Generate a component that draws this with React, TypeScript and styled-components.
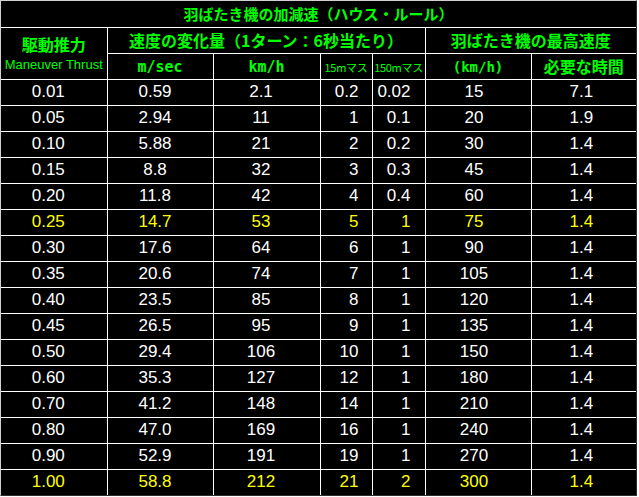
import styled, { createGlobalStyle } from "styled-components";

const GREEN = "#00ff00";
const YELLOW = "#ffff00";

const GlobalStyle = createGlobalStyle`
  html, body {
    margin: 0;
    padding: 0;
    background: #ffffff;
  }
`;

const Frame = styled.div`
  display: inline-block;
  background: #000000;
  border-top: 1px solid #d0d0d0;
  border-left: 1px solid #d0d0d0;
  border-right: 1px solid #303030;
  border-bottom: 1px solid #303030;
`;

const Sheet = styled.table`
  width: 635px;
  table-layout: fixed;
  border-collapse: collapse;
  border-style: hidden;
  background: #000000;

  tr {
    height: 26px;
  }
`;

const HeadCell = styled.th<{ $size?: number }>`
  border: 1px solid #ffffff;
  padding: 0;
  color: ${GREEN};
  font-family: "Noto Sans CJK JP", "DejaVu Sans", sans-serif;
  font-weight: 700;
  font-size: ${({ $size }) => $size ?? 16}px;
  line-height: 18px;
  text-align: center;
  vertical-align: middle;
  white-space: nowrap;
`;

const MainLabel = styled.div`
  line-height: 20px;
`;

const SubLabel = styled.div`
  margin-top: 3px;
  font-family: "Liberation Sans", Arial, sans-serif;
  font-weight: 400;
  font-size: 13px;
  line-height: 15px;
`;

const Small = styled.span`
  font-family: "Noto Sans CJK JP", sans-serif;
  font-weight: 400;
  font-size: 11px;
  letter-spacing: -0.3px;
`;

const Unit = styled.span<{ $size?: number }>`
  font-family: "DejaVu Sans Mono", "Liberation Mono", monospace;
  font-weight: 700;
  font-size: ${({ $size }) => $size ?? 15}px;
`;

const Cell = styled.td<{ $tone: "white" | "yellow"; $align?: "center" | "right"; $pad: number }>`
  border: 1px solid #ffffff;
  padding: 0 ${({ $pad }) => $pad}px 0 0;
  color: ${({ $tone }) => ($tone === "yellow" ? YELLOW : "#ffffff")};
  font-family: "Liberation Sans", Arial, sans-serif;
  font-size: 17px;
  line-height: 20px;
  text-align: ${({ $align }) => $align ?? "center"};
  vertical-align: middle;
  white-space: nowrap;
  overflow: visible;
`;

const rows: string[][] = [
  ["0.01", "0.59", "2.1", "0.2", "0.02", "15", "7.1"],
  ["0.05", "2.94", "11", "1", "0.1", "20", "1.9"],
  ["0.10", "5.88", "21", "2", "0.2", "30", "1.4"],
  ["0.15", "8.8", "32", "3", "0.3", "45", "1.4"],
  ["0.20", "11.8", "42", "4", "0.4", "60", "1.4"],
  ["0.25", "14.7", "53", "5", "1", "75", "1.4"],
  ["0.30", "17.6", "64", "6", "1", "90", "1.4"],
  ["0.35", "20.6", "74", "7", "1", "105", "1.4"],
  ["0.40", "23.5", "85", "8", "1", "120", "1.4"],
  ["0.45", "26.5", "95", "9", "1", "135", "1.4"],
  ["0.50", "29.4", "106", "10", "1", "150", "1.4"],
  ["0.60", "35.3", "127", "12", "1", "180", "1.4"],
  ["0.70", "41.2", "148", "14", "1", "210", "1.4"],
  ["0.80", "47.0", "169", "16", "1", "240", "1.4"],
  ["0.90", "52.9", "191", "19", "1", "270", "1.4"],
  ["1.00", "58.8", "212", "21", "2", "300", "1.4"],
];

const highlighted = ["0.25", "1.00"];

// per column: alignment and right padding
const columns: { align: "center" | "right"; pad: number }[] = [
  { align: "center", pad: 11 },
  { align: "center", pad: 10 },
  { align: "center", pad: 11 },
  { align: "right", pad: 13 },
  { align: "right", pad: 14 },
  { align: "center", pad: 8 },
  { align: "center", pad: 5 },
];

const widths = [106, 106, 107, 52, 53, 106, 105];

export default function App() {
  return (
    <>
      <GlobalStyle />
      <Frame>
        <Sheet>
          <colgroup>
            {widths.map((w, i) => (
              <col key={i} style={{ width: w }} />
            ))}
          </colgroup>
          <thead>
            <tr>
              <HeadCell colSpan={7} $size={15}>
                羽ばたき機の加減速（ハウス・ルール）
              </HeadCell>
            </tr>
            <tr>
              <HeadCell rowSpan={2}>
                <MainLabel>駆動推力</MainLabel>
                <SubLabel>Maneuver Thrust</SubLabel>
              </HeadCell>
              <HeadCell colSpan={4}>速度の変化量（1ターン：6秒当たり）</HeadCell>
              <HeadCell colSpan={2}>羽ばたき機の最高速度</HeadCell>
            </tr>
            <tr>
              <HeadCell>
                <Unit>m/sec</Unit>
              </HeadCell>
              <HeadCell>
                <Unit>km/h</Unit>
              </HeadCell>
              <HeadCell>
                <Small>15mマス</Small>
              </HeadCell>
              <HeadCell>
                <Small>150mマス</Small>
              </HeadCell>
              <HeadCell>
                <Unit $size={14}>(km/h)</Unit>
              </HeadCell>
              <HeadCell>必要な時間</HeadCell>
            </tr>
          </thead>
          <tbody>
            {rows.map((row) => {
              const tone = highlighted.includes(row[0]) ? "yellow" : "white";
              return (
                <tr key={row[0]}>
                  {row.map((value, i) => (
                    <Cell key={i} $tone={tone} $align={columns[i].align} $pad={columns[i].pad}>
                      {value}
                    </Cell>
                  ))}
                </tr>
              );
            })}
          </tbody>
        </Sheet>
      </Frame>
    </>
  );
}
